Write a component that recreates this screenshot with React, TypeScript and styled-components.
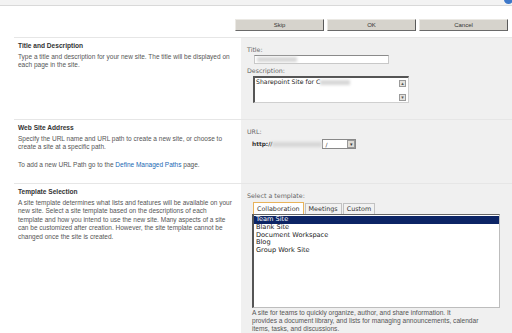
import React, { FC } from "react";
import styled, { createGlobalStyle } from "styled-components";

const GlobalStyle = createGlobalStyle`
  html, body {
    margin: 0;
    padding: 0;
    background: #ffffff;
  }
  body {
    font-family: "Liberation Sans", Arial, sans-serif;
    color: #4c4c4c;
  }
`;

const templates = [
  "Team Site",
  "Blank Site",
  "Document Workspace",
  "Blog",
  "Group Work Site",
];

const App: FC = () => {
  return (
    <Page>
      <GlobalStyle />
      <TopStrip>
        <HelpDot />
      </TopStrip>
      <ButtonRow>
        <Button>Skip</Button>
        <Button>OK</Button>
        <Button>Cancel</Button>
      </ButtonRow>

      <Sections>
        <Section height={81}>
          <Info>
            <Heading>Title and Description</Heading>
            <Text>
              Type a title and description for your new site. The title will be
              displayed on
              <br />
              each page in the site.
            </Text>
          </Info>
          <Fields>
            <Label>Title:</Label>
            <TitleInput>
              <Blurred width={40} />
            </TitleInput>
            <Label>Description:</Label>
            <TextArea>
              <AreaText>
                Sharepoint Site for C<Blurred width={30} />
              </AreaText>
              <ScrollBar>
                <ScrollArrow>▴</ScrollArrow>
                <ScrollArrow>▾</ScrollArrow>
              </ScrollBar>
            </TextArea>
          </Fields>
        </Section>

        <Section height={63}>
          <Info>
            <Heading>Web Site Address</Heading>
            <Text>
              Specify the URL name and URL path to create a new site, or choose
              to
              <br />
              create a site at a specific path.
            </Text>
            <Text>
              To add a new URL Path go to the <Link>Define Managed Paths</Link>{" "}
              page.
            </Text>
          </Info>
          <Fields>
            <Label>URL:</Label>
            <UrlRow>
              <UrlPrefix>http://</UrlPrefix>
              <Blurred width={50} />
              <Select>
                <span>/</span>
                <DropButton>▾</DropButton>
              </Select>
            </UrlRow>
          </Fields>
        </Section>

        <Section height={160}>
          <Info>
            <Heading>Template Selection</Heading>
            <Text>
              A site template determines what lists and features will be
              available on your
              <br />
              new site. Select a site template based on the descriptions of each
              <br />
              template and how you intend to use the new site. Many aspects of a
              site
              <br />
              can be customized after creation. However, the site template
              cannot be
              <br />
              changed once the site is created.
            </Text>
          </Info>
          <Fields>
            <Label>Select a template:</Label>
            <Tabs>
              <Tab active>Collaboration</Tab>
              <Tab>Meetings</Tab>
              <Tab>Custom</Tab>
            </Tabs>
            <ListBox>
              {templates.map((t, i) => (
                <Option key={t} selected={i === 0}>
                  {t}
                </Option>
              ))}
            </ListBox>
            <TemplateText>
              A site for teams to quickly organize, author, and share
              information. It
              <br />
              provides a document library, and lists for managing
              announcements, calendar
              <br />
              items, tasks, and discussions.
            </TemplateText>
          </Fields>
        </Section>
      </Sections>
    </Page>
  );
};

export default App;

const Page = styled.div`
  width: 512px;
  height: 333px;
  overflow: hidden;
  background: #ffffff;
`;

const TopStrip = styled.div`
  position: relative;
  height: 5px;
  background: #f3f3f3;
  border-bottom: 1px solid #d9d9d9;
`;

const HelpDot = styled.div`
  position: absolute;
  right: -1px;
  top: -5px;
  width: 9px;
  height: 9px;
  border-radius: 50%;
  background: #3d78c9;
`;

const ButtonRow = styled.div`
  display: flex;
  justify-content: flex-end;
  gap: 3px;
  margin-top: 13px;
  padding-right: 4px;
`;

const Button = styled.div`
  box-sizing: border-box;
  width: 89px;
  height: 12px;
  display: flex;
  align-items: center;
  justify-content: center;
  font-size: 6px;
  color: #333;
  background: #d6d3cc;
  border-top: 1px solid #ebe9e4;
  border-left: 1px solid #ebe9e4;
  border-right: 1px solid #5a5a5a;
  border-bottom: 1px solid #6a6a6a;
`;

const Sections = styled.div`
  margin-top: 6px;
  margin-left: 14px;
`;

const Section = styled.div<{ height: number }>`
  display: grid;
  grid-template-columns: 227px 1fr;
  height: ${(p) => p.height}px;
  border-top: 1px solid #e6e6e6;
`;

const Info = styled.div`
  padding: 4px 4px 0 4px;
`;

const Heading = styled.div`
  font-size: 6.6px;
  font-weight: bold;
  color: #333;
  line-height: 8px;
  margin-bottom: 3px;
`;

const Text = styled.div`
  font-size: 6.5px;
  line-height: 8.4px;
  color: #555;
  white-space: nowrap;
  margin-bottom: 9px;
`;

const Link = styled.span`
  color: #2168b3;
`;

const Fields = styled.div`
  background: #f0f0f0;
  padding: 8px 0 0 6px;
  display: flex;
  flex-direction: column;
  align-items: flex-start;
  font-family: "DejaVu Sans", Verdana, sans-serif;
`;

const Label = styled.div`
  font-size: 6.3px;
  line-height: 8px;
  color: #666;
  margin-bottom: 1px;
`;

const TitleInput = styled.div`
  box-sizing: border-box;
  width: 135px;
  height: 9px;
  margin: 0 0 3px 7px;
  background: #fff;
  border: 1px solid #c8c8c8;
  border-top: 1px solid #8a8a8a;
  display: flex;
  align-items: center;
  padding-left: 2px;
`;

const Blurred = styled.span<{ width: number }>`
  display: inline-block;
  width: ${(p) => p.width}px;
  height: 5px;
  background: #d6d6d6;
  filter: blur(1.5px);
  vertical-align: middle;
`;

const TextArea = styled.div`
  box-sizing: border-box;
  width: 156px;
  height: 27px;
  margin-left: 6px;
  background: #fff;
  border: 1px solid #cfcfcf;
  border-top: 2px solid #555;
  border-left: 2px solid #555;
  display: flex;
  justify-content: space-between;
`;

const AreaText = styled.div`
  font-size: 6.2px;
  line-height: 8px;
  color: #222;
  padding-left: 1px;
`;

const ScrollBar = styled.div`
  width: 8px;
  display: flex;
  flex-direction: column;
  justify-content: space-between;
  padding: 2px 1px 1px 0;
`;

const ScrollArrow = styled.div`
  box-sizing: border-box;
  width: 7px;
  height: 7px;
  background: #e4e2dd;
  border: 1px solid #9a9a9a;
  font-size: 5px;
  line-height: 5px;
  text-align: center;
  color: #555;
`;

const UrlRow = styled.div`
  display: flex;
  align-items: center;
  margin: 2px 0 0 5px;
`;

const UrlPrefix = styled.span`
  font-size: 5.8px;
  font-weight: bold;
  color: #333;
`;

const Select = styled.div`
  box-sizing: border-box;
  width: 34px;
  height: 10px;
  background: #fff;
  border: 1px solid #888;
  display: flex;
  align-items: center;
  justify-content: space-between;
  padding-left: 2px;
  font-size: 6px;
  color: #333;
`;

const DropButton = styled.span`
  box-sizing: border-box;
  width: 8px;
  height: 8px;
  background: #dedbd5;
  border: 1px solid #999;
  font-size: 5px;
  line-height: 6px;
  text-align: center;
`;

const Tabs = styled.div`
  display: flex;
  margin: 1px 0 0 6px;
  gap: 1px;
`;

const Tab = styled.div<{ active?: boolean }>`
  box-sizing: border-box;
  height: ${(p) => (p.active ? 12 : 11)}px;
  margin-top: ${(p) => (p.active ? 0 : 1)}px;
  padding: 0 3px;
  display: flex;
  align-items: center;
  font-size: 6.4px;
  color: #333;
  background: ${(p) => (p.active ? "#fff" : "#f2f2f2")};
  border: 1px solid ${(p) => (p.active ? "#e8b35a" : "#c2c2c2")};
  border-bottom: none;
`;

const ListBox = styled.div`
  box-sizing: border-box;
  width: 248px;
  height: 94px;
  margin-left: 5px;
  background: #fff;
  border: 1px solid #bdbdbd;
  border-top: 1px solid #666;
  border-left: 2px solid #555;
  padding-top: 1px;
`;

const Option = styled.div<{ selected?: boolean }>`
  font-size: 6.6px;
  line-height: 7.8px;
  padding-left: 2px;
  color: ${(p) => (p.selected ? "#fff" : "#222")};
  background: ${(p) => (p.selected ? "#0c2465" : "transparent")};
`;

const TemplateText = styled.div`
  font-family: "Liberation Sans", Arial, sans-serif;
  font-size: 6.6px;
  line-height: 8px;
  color: #555;
  white-space: nowrap;
  margin: 1px 0 0 5px;
`;
